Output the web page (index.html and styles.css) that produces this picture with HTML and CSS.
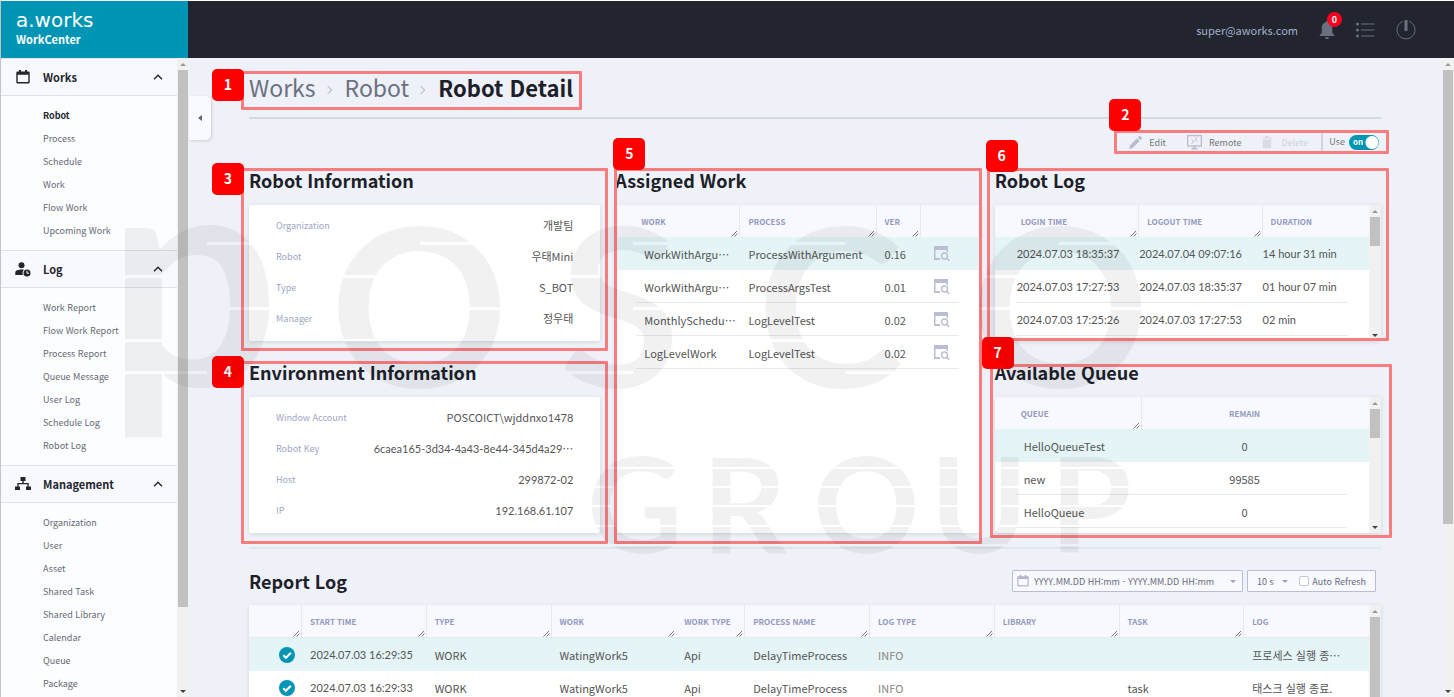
FILE: index.html
```html
<!DOCTYPE html>
<html lang="ko">
<head>
    <meta charset="UTF-8">
    <meta name="viewport" content="width=device-width, initial-scale=1.0">
    <title>a.works WorkCenter</title>
    <link rel="stylesheet" href="styles.css">
</head>
<body>
    <!-- shared icons -->
    <svg class="sprite" aria-hidden="true">
        <symbol id="i-cal" viewBox="0 0 14 14"><path fill="currentColor" fill-rule="evenodd" d="M3 0h2v1.500h4V0h2v1.500h1.500a1.200 1.200 0 0 1 1.200 1.200v9.600a1.200 1.200 0 0 1-1.200 1.200h-11a1.200 1.200 0 0 1-1.200-1.200V2.700a1.200 1.200 0 0 1 1.200-1.200H3zM1.700 4.700v7.400h10.600V4.700z"/></symbol>
        <symbol id="i-up" viewBox="0 0 10 6"><path d="M1 5.200 5 1.200 9 5.200" fill="none" stroke="currentColor" stroke-width="1.400"/></symbol>
        <symbol id="i-resize" viewBox="0 0 7 7"><path d="M.500 6.500 6 1M3.500 6.500 6.500 3.500" fill="none" stroke="#777" stroke-width="1"/></symbol>
        <symbol id="i-view" viewBox="0 0 16 16"><path fill="none" stroke="#b9bed3" stroke-width="1.500" d="M13.200 6V1.500M.750 1v12H6"/><path fill="#b9bed3" d="M0 0h14v4H0zM0 12.200h6V14H0z"/><circle cx="10.500" cy="10" r="3" fill="none" stroke="#b9bed3" stroke-width="1.400"/><path d="m12.700 12.200 2.600 2.600" stroke="#b9bed3" stroke-width="1.600"/></symbol>
        <symbol id="i-ok" viewBox="0 0 16 16"><circle cx="8" cy="8" r="8" fill="#0095b5"/><path d="m4.300 8.200 2.600 2.500 5-5" fill="none" stroke="#fff" stroke-width="2.200"/></symbol>
    </svg>

    <header class="topbar">
        <a class="brand" href="#"><span class="brand-name">a.works</span><span class="brand-sub">WorkCenter</span></a>
        <div class="user">
            <span class="email">super@aworks.com</span>
            <button class="icon-btn bell" aria-label="Notifications">
                <svg width="16" height="20" viewBox="0 0 16 20"><path fill="#6b7080" d="M8 1c1 0 1.500.700 1.500 1.600C12 3.400 13.300 5.500 13.300 8v5l2 2.200v.800H.700v-.800l2-2.200V8c0-2.500 1.300-4.600 3.800-5.400C6.500 1.700 7 1 8 1zM6 17.200h4c0 1.100-.900 1.800-2 1.800s-2-.700-2-1.800z"/></svg>
                <span class="count">0</span>
            </button>
            <button class="icon-btn" aria-label="List">
                <svg width="19" height="16" viewBox="0 0 19 16"><path stroke="#6b7080" stroke-width="1.200" d="M5 2h13.500M5 8h13.500M5 14h13.500"/><g fill="#6b7080"><circle cx="1.500" cy="2" r="1.500"/><circle cx="1.500" cy="8" r="1.500"/><circle cx="1.500" cy="14" r="1.500"/></g></svg>
            </button>
            <button class="icon-btn" aria-label="Logout">
                <svg width="20" height="20" viewBox="0 0 20 20"><path d="M7 1.400a9 9 0 1 0 6 0" fill="none" stroke="#6b7080" stroke-width="1"/><path d="M10 0v11" stroke="#6b7080" stroke-width="3"/></svg>
            </button>
        </div>
    </header>

    <div class="layout">
        <aside class="sidebar">
            <nav class="menu">
                <button class="menu-title">
                    <svg class="menu-icon" width="14" height="14"><use href="#i-cal"/></svg>Works<svg class="chev" width="10" height="6"><use href="#i-up"/></svg>
                </button>
                <ul>
                    <li><a class="active" href="#">Robot</a></li>
                    <li><a href="#">Process</a></li>
                    <li><a href="#">Schedule</a></li>
                    <li><a href="#">Work</a></li>
                    <li><a href="#">Flow Work</a></li>
                    <li><a href="#">Upcoming Work</a></li>
                </ul>
                <button class="menu-title">
                    <svg class="menu-icon" width="16" height="15" viewBox="0 0 16 15"><g fill="#22252e"><circle cx="6.500" cy="3.200" r="3"/><path d="M.300 13V10.500C.300 8.500 3.500 7.600 6.500 7.600c1 0 1.800.100 2.500.200a4.500 4.500 0 0 0-1 5.200z"/><circle cx="12" cy="11" r="3.500"/></g><path d="M12 8.800v2.400h2" fill="none" stroke="#fff" stroke-width="1"/></svg>Log<svg class="chev" width="10" height="6"><use href="#i-up"/></svg>
                </button>
                <ul>
                    <li><a href="#">Work Report</a></li>
                    <li><a href="#">Flow Work Report</a></li>
                    <li><a href="#">Process Report</a></li>
                    <li><a href="#">Queue Message</a></li>
                    <li><a href="#">User Log</a></li>
                    <li><a href="#">Schedule Log</a></li>
                    <li><a href="#">Robot Log</a></li>
                </ul>
                <button class="menu-title">
                    <svg class="menu-icon" width="16" height="14" viewBox="0 0 16 14"><path fill="#22252e" d="M5.500 0h5v4H8.700v2h5v3.500H16V13h-5V9.500h1.400V7.300H3.600v2.200H5V13H0V9.500h2.300V6h5V4H5.500z"/></svg>Management<svg class="chev" width="10" height="6"><use href="#i-up"/></svg>
                </button>
                <ul>
                    <li><a href="#">Organization</a></li>
                    <li><a href="#">User</a></li>
                    <li><a href="#">Asset</a></li>
                    <li><a href="#">Shared Task</a></li>
                    <li><a href="#">Shared Library</a></li>
                    <li><a href="#">Calendar</a></li>
                    <li><a href="#">Queue</a></li>
                    <li><a href="#">Package</a></li>
                </ul>
            </nav>
            <div class="scroll"><i class="arrow-up"></i><i class="thumb thumb-menu"></i><i class="arrow-down"></i></div>
            <button class="collapse" aria-label="Collapse menu"></button>
        </aside>

        <main class="content">
            <div class="page-head">
                <h1 class="crumbs">
                    <a href="#">Works</a><i></i><a href="#">Robot</a><i></i><strong>Robot Detail</strong>
                    <span class="mark mark-1"><b>1</b></span>
                </h1>
            </div>

            <div class="toolbar-row">
                <div class="toolbar">
                    <button class="tool tool-edit"><svg width="13" height="13" viewBox="0 0 13 13"><path fill="#b9bbcd" d="M0 13l1-3.500L8 2.300 10.700 5 3.500 12zM8.800 1.500 10 .300c.500-.400 1-.400 1.400 0l1.300 1.300c.400.400.400.900 0 1.400l-1.200 1.200z"/></svg>Edit</button>
                    <button class="tool tool-remote"><svg width="15" height="15" viewBox="0 0 15 15"><rect x=".600" y=".600" width="13.800" height="10.400" fill="none" stroke="#b9bbcd" stroke-width="1.300"/><path d="m4.500 4.500 2.500 2-2.500 2M10.500 2.500 8 4.500l2.500 2" fill="none" stroke="#b9bbcd"/><path fill="#b9bbcd" d="M6.500 11h2v2h2v1.600h-6V13h2z"/></svg>Remote</button>
                    <button class="tool tool-delete" disabled><svg width="10" height="12" viewBox="0 0 10 12"><path fill="#d9dbe5" d="M0 1.200h2.800L3.500 0h3l.700 1.200H10v1.300H0zM.800 3.500h8.400V12H.800z"/></svg>Delete</button>
                    <label class="use">Use<span class="switch"><input type="checkbox" checked><span>on</span></span></label>
                    <span class="mark mark-2"><b>2</b></span>
                </div>
            </div>

            <div class="panels">
                <div class="stack">
                    <section class="panel">
                        <h2>Robot Information</h2>
                        <dl class="card info">
                            <div><dt>Organization</dt><dd>개발팀</dd></div>
                            <div><dt>Robot</dt><dd>우태Mini</dd></div>
                            <div><dt>Type</dt><dd>S_BOT</dd></div>
                            <div><dt>Manager</dt><dd>정우태</dd></div>
                        </dl>
                        <span class="mark mark-3"><b>3</b></span>
                    </section>
                    <section class="panel">
                        <h2>Environment Information</h2>
                        <dl class="card info">
                            <div><dt>Window Account</dt><dd>POSCOICT\wjddnxo<span class="num">1478</span></dd></div>
                            <div><dt>Robot Key</dt><dd><span class="num">6caea165-3d34-4a43-8e44-345d4a29</span>…</dd></div>
                            <div><dt>Host</dt><dd class="num">299872-02</dd></div>
                            <div><dt>IP</dt><dd class="num">192.168.61.107</dd></div>
                        </dl>
                        <span class="mark mark-4"><b>4</b></span>
                    </section>
                </div>

                <section class="panel">
                    <h2>Assigned Work</h2>
                    <div class="card grid-box tall">
                        <table class="works">
                            <thead>
                                <tr><th>WORK<svg class="rs"><use href="#i-resize"/></svg></th><th>PROCESS<svg class="rs"><use href="#i-resize"/></svg></th><th>VER<svg class="rs"><use href="#i-resize"/></svg></th><th></th></tr>
                            </thead>
                            <tbody>
                                <tr class="on"><td>WorkWithArgu…</td><td>ProcessWithArgument</td><td>0.16</td><td><svg width="16" height="16"><use href="#i-view"/></svg></td></tr>
                                <tr><td>WorkWithArgu…</td><td>ProcessArgsTest</td><td>0.01</td><td><svg width="16" height="16"><use href="#i-view"/></svg></td></tr>
                                <tr><td>MonthlySchedu…</td><td>LogLevelTest</td><td>0.02</td><td><svg width="16" height="16"><use href="#i-view"/></svg></td></tr>
                                <tr><td>LogLevelWork</td><td>LogLevelTest</td><td>0.02</td><td><svg width="16" height="16"><use href="#i-view"/></svg></td></tr>
                            </tbody>
                        </table>
                    </div>
                    <span class="mark mark-5"><b>5</b></span>
                </section>

                <div class="stack">
                    <section class="panel">
                        <h2>Robot Log</h2>
                        <div class="card grid-box">
                            <table class="logs">
                                <thead>
                                    <tr><th>LOGIN TIME<svg class="rs"><use href="#i-resize"/></svg></th><th>LOGOUT TIME<svg class="rs"><use href="#i-resize"/></svg></th><th>DURATION</th></tr>
                                </thead>
                                <tbody class="num">
                                    <tr class="on"><td>2024.07.03 18:35:37</td><td>2024.07.04 09:07:16</td><td>14 hour 31 min</td></tr>
                                    <tr><td>2024.07.03 17:27:53</td><td>2024.07.03 18:35:37</td><td>01 hour 07 min</td></tr>
                                    <tr><td>2024.07.03 17:25:26</td><td>2024.07.03 17:27:53</td><td>02 min</td></tr>
                                </tbody>
                            </table>
                            <div class="scroll"><i class="arrow-up"></i><i class="thumb"></i><i class="arrow-down"></i></div>
                        </div>
                        <span class="mark mark-6"><b>6</b></span>
                    </section>
                    <section class="panel">
                        <h2>Available Queue</h2>
                        <div class="card grid-box">
                            <table class="queues">
                                <thead>
                                    <tr><th>QUEUE<svg class="rs"><use href="#i-resize"/></svg></th><th>REMAIN</th></tr>
                                </thead>
                                <tbody>
                                    <tr class="on"><td>HelloQueueTest</td><td>0</td></tr>
                                    <tr><td>new</td><td>99585</td></tr>
                                    <tr><td>HelloQueue</td><td>0</td></tr>
                                </tbody>
                            </table>
                            <div class="scroll"><i class="arrow-up"></i><i class="thumb"></i><i class="arrow-down"></i></div>
                        </div>
                        <span class="mark mark-7"><b>7</b></span>
                    </section>
                </div>
            </div>

            <section class="report">
                <div class="report-head">
                    <h2>Report Log</h2>
                    <div class="filters">
                        <label class="field date">
                            <svg width="12" height="12"><use href="#i-cal"/></svg>
                            <input type="text" aria-label="Period" placeholder="YYYY.MM.DD HH:mm - YYYY.MM.DD HH:mm">
                            <i class="caret"></i>
                        </label>
                        <div class="field refresh">
                            <select aria-label="Interval"><option>10 s</option><option>30 s</option></select><i class="caret"></i>
                            <label class="auto"><input type="checkbox">Auto Refresh</label>
                        </div>
                    </div>
                </div>
                <div class="card grid-box report-box">
                    <table class="reports">
                        <thead>
                            <tr>
                                <th><svg class="rs"><use href="#i-resize"/></svg></th>
                                <th>START TIME<svg class="rs"><use href="#i-resize"/></svg></th>
                                <th>TYPE<svg class="rs"><use href="#i-resize"/></svg></th>
                                <th>WORK<svg class="rs"><use href="#i-resize"/></svg></th>
                                <th>WORK TYPE<svg class="rs"><use href="#i-resize"/></svg></th>
                                <th>PROCESS NAME<svg class="rs"><use href="#i-resize"/></svg></th>
                                <th>LOG TYPE<svg class="rs"><use href="#i-resize"/></svg></th>
                                <th>LIBRARY<svg class="rs"><use href="#i-resize"/></svg></th>
                                <th>TASK<svg class="rs"><use href="#i-resize"/></svg></th>
                                <th>LOG</th>
                            </tr>
                        </thead>
                        <tbody>
                            <tr class="on"><td><svg width="16" height="16"><use href="#i-ok"/></svg></td><td class="num">2024.07.03 16:29:35</td><td>WORK</td><td>WatingWork5</td><td>Api</td><td>DelayTimeProcess</td><td class="level">INFO</td><td></td><td></td><td>프로세스 실행 종…</td></tr>
                            <tr><td><svg width="16" height="16"><use href="#i-ok"/></svg></td><td class="num">2024.07.03 16:29:33</td><td>WORK</td><td>WatingWork5</td><td>Api</td><td>DelayTimeProcess</td><td class="level">INFO</td><td></td><td>task</td><td>태스크 실행 종료.</td></tr>
                        </tbody>
                    </table>
                    <div class="scroll"><i class="arrow-up"></i><i class="thumb thumb-fill"></i></div>
                </div>
            </section>
        </main>
        <div class="scroll page-scroll"><i class="arrow-up"></i><i class="thumb thumb-page"></i><i class="arrow-down"></i></div>
    </div>

    <!-- watermark -->
    <svg class="watermark" viewBox="0 0 1060 350" width="1060" height="350" aria-hidden="true">
        <mask id="cuts">
            <rect width="1060" height="350" fill="#fff"/>
            <g fill="#000">
                <path d="M82 20h90v3H82zM295 20h90v3h-90zM508 20h213v3H508zM934 20h90v3h-90zM0 53h82v3H0zM210 53h85v3h-85zM420 53h88v3h-88zM722 53h220v3H722zM82 85h90v3H82zM295 85h90v3h-90zM508 85h90v3h-90zM850 85h190v3H850zM0 117h82v3H0zM210 117h85v3h-85zM420 117h88v3h-88zM640 117h81v3h-81zM0 149h82v3H0zM420 149h88v3h-88zM721 149h90v3h-90z"/>
                <path d="M460 245h560v2H460zM460 264h560v2H460zM460 283h560v2H460zM460 303h560v2H460zM460 322h560v2H460z"/>
            </g>
        </mask>
        <g mask="url(#cuts)" fill="#000">
            <text class="wm-p" x="-20" y="164">p</text>
            <text class="wm-big" x="205 434 632 846" y="165">OSCO</text>
            <text class="wm-small" x="462 577 688 805 925" y="331">GROUP</text>
        </g>
    </svg>
</body>
</html>
```

FILE: styles.css
```css
* {
    box-sizing: border-box;
}
body {
    margin: 0;
    height: 100vh;
    overflow: hidden;
    display: flex;
    flex-direction: column;
    position: relative;
    border-top: 1px solid #fff;
    border-left: 1px solid #c4c4c4;
    background: #eef1f7;
    color: #555;
    font-family: "Noto Sans CJK KR", sans-serif;
    font-size: 11px;
}
h1, h2, ul, dl, dd {
    margin: 0;
    padding: 0;
}
a {
    color: inherit;
    text-decoration: none;
}
button, input, select {
    font: inherit;
    color: inherit;
    border: none;
    background: none;
    padding: 0;
    margin: 0;
}
svg {
    flex: none;
}
.sprite {
    position: absolute;
    width: 0;
    height: 0;
}
.num {
    font-family: Lato, "Noto Sans CJK KR", sans-serif;
}

/* top bar */
.topbar {
    display: flex;
    justify-content: space-between;
    flex: none;
    height: 57px;
    background: #22252e;
}
.brand {
    width: 187px;
    padding: 9px 15px;
    display: flex;
    flex-direction: column;
    background: #0095b5;
    color: #fff;
}
.brand-name {
    font: 20px/20px "DejaVu Sans", sans-serif;
}
.brand-sub {
    font-weight: bold;
    line-height: 18px;
}
.user {
    display: flex;
    align-items: center;
    gap: 21px;
    padding-right: 38px;
}
.email {
    color: #a3b0cf;
}
.icon-btn {
    position: relative;
    display: flex;
}
.count {
    position: absolute;
    left: 8px;
    top: -8px;
    width: 15px;
    height: 15px;
    border-radius: 50%;
    background: #f9001e;
    color: #fff;
    font-size: 9px;
    font-weight: bold;
    line-height: 15px;
}

/* sidebar */
.layout {
    flex: 1;
    display: flex;
    min-height: 0;
}
.sidebar {
    position: relative;
    display: flex;
    flex: none;
    width: 188px;
    background: #fcfdff;
}
.menu {
    flex: 1;
    overflow: hidden;
}
.menu-title {
    display: flex;
    align-items: center;
    width: 100%;
    height: 38px;
    padding: 0 14px;
    border-top: 1px solid #e1e3ec;
    border-bottom: 1px solid #e1e3ec;
    background: #f8f9fe;
    color: #22252e;
    font-weight: bold;
    text-align: left;
}
.menu-icon {
    width: 16px;
    margin-right: 12px;
}
.chev {
    margin-left: auto;
}
.menu ul {
    list-style: none;
    padding: 8px 0 8px 42px;
}
.menu li {
    font-size: 9px;
    line-height: 23px;
    color: #666973;
}
.menu .active {
    color: #22252e;
    font-weight: bold;
}
.collapse {
    position: absolute;
    left: 188px;
    top: 38px;
    width: 22px;
    height: 44px;
    border-radius: 0 5px 5px 0;
    background: #f9faff;
    box-shadow: 1px 1px 3px rgba(0, 0, 0, 0.15);
}
.collapse::before {
    content: "";
    display: block;
    margin-left: 9px;
    width: 0;
    border: 3px solid transparent;
    border-left: none;
    border-right: 4px solid #5c6180;
}

/* scrollbars */
.scroll {
    display: flex;
    flex-direction: column;
    flex: none;
    width: 12px;
    background: #f1f1f1;
}
.arrow-up, .arrow-down {
    flex: none;
    height: 12px;
    position: relative;
}
.arrow-up::before, .arrow-down::before {
    content: "";
    position: absolute;
    left: 3px;
    top: 5px;
    border: 3px solid transparent;
}
.arrow-up::before {
    border-top: none;
    border-bottom-color: #999;
}
.arrow-down {
    margin-top: auto;
}
.arrow-down::before {
    border-bottom: none;
    border-top-color: #444;
}
.thumb {
    height: 29px;
    margin: 0 1px;
    background: #c1c1c1;
}
.thumb-menu {
    height: 84%;
}
.thumb-page {
    height: 71%;
}
.thumb-fill {
    flex: 1;
}

/* content */
.content {
    flex: 1;
    min-width: 0;
    padding: 0 61px 0 60px;
    overflow: hidden;
}
.page-head {
    padding: 13px 0 12px;
    border-bottom: 2px solid #d3d9e5;
}
.crumbs {
    position: relative;
    display: inline-flex;
    align-items: center;
    height: 34px;
    vertical-align: top;
    color: #6b7082;
    font-size: 23px;
    font-weight: normal;
    line-height: 32px;
}
.crumbs a, .crumbs strong {
    padding-bottom: 2px;
}
.crumbs strong {
    color: #1c2029;
    font-size: 22px;
}
.crumbs i {
    width: 6px;
    height: 6px;
    margin: 4px 14px 0 9px;
    border: solid #b8bdcb;
    border-width: 1px 1px 0 0;
    transform: rotate(45deg);
}
.toolbar-row {
    display: flex;
    justify-content: flex-end;
    margin: 11px 0 14px;
}
.toolbar {
    position: relative;
    display: flex;
    align-items: center;
    height: 24px;
    padding-right: 2px;
    font-size: 9px;
    color: #777;
}
.tool {
    display: flex;
    align-items: center;
    gap: 7px;
    margin-right: 21px;
}
.tool-delete {
    gap: 9px;
    margin-right: 13px;
    color: #d0d3dc;
}
.use {
    display: flex;
    align-items: center;
    gap: 4px;
    padding-left: 6px;
    border-left: 2px solid #d3d5de;
    line-height: 18px;
}
.switch {
    position: relative;
    display: flex;
    color: #fff;
    font-size: 8px;
    font-weight: bold;
    line-height: 14px;
}
.switch input {
    appearance: none;
    width: 30px;
    height: 15px;
    border-radius: 8px;
    background: radial-gradient(circle at 23px 50%, #fff 6px, #0095b5 7px);
}
.switch span {
    position: absolute;
    left: 4px;
}
.panels {
    display: grid;
    grid-template-columns: 351fr 364fr 386fr;
    gap: 15px;
    padding-bottom: 14px;
    border-bottom: 2px solid #e1e5ec;
}
.stack {
    display: flex;
    flex-direction: column;
    gap: 19px;
    min-width: 0;
}
.panel {
    position: relative;
    display: flex;
    flex-direction: column;
    min-width: 0;
}
h2 {
    color: #1c2029;
    font-size: 18px;
    font-weight: bold;
    line-height: 24px;
}
.panel h2 {
    margin-bottom: 13px;
}
.card {
    background: #fff;
    border-radius: 2px;
    box-shadow: 0 1px 4px rgba(0, 0, 0, 0.12);
}
.info {
    padding: 5px 27px 7px;
}
.info div {
    display: flex;
    justify-content: space-between;
    height: 31px;
    line-height: 31px;
}
.info dt {
    color: #a0a5c5;
    font-size: 9px;
}

/* tables */
.grid-box {
    display: flex;
    align-items: stretch;
    height: 136px;
    overflow: hidden;
}
.tall {
    flex: 1;
    align-items: flex-start;
}
table {
    flex: 1;
    align-self: flex-start;
    width: 100%;
    table-layout: fixed;
    border-collapse: separate;
    border-spacing: 0;
}
th {
    position: relative;
    height: 32px;
    padding: 0 0 0 8px;
    border-right: 1px solid #e6e8ef;
    background: #f8f9fe;
    color: #9299c0;
    font-size: 8px;
    text-align: left;
    white-space: nowrap;
}
th:last-child {
    border-right: none;
}
.rs {
    position: absolute;
    right: 1px;
    bottom: 0;
    width: 7px;
    height: 7px;
}
td {
    height: 33px;
    padding: 0 0 0 8px;
    white-space: nowrap;
}
td svg {
    display: block;
}
tbody tr {
    background: linear-gradient(#e9eaee, #e9eaee) no-repeat center bottom / calc(100% - 42px) 1px;
}
tbody .on {
    background: #e4f4f7;
}
.works th:nth-child(1) { width: 125px; }
.works th:nth-child(2) { width: 136px; }
.works th:nth-child(3) { width: 44px; }
.works th:nth-child(4) { width: 59px; }
.works th:first-child, .logs th:first-child, .queues th:first-child {
    padding-left: 26px;
}
.works td:first-child, .queues td:first-child {
    padding-left: 29px;
}
.works td:last-child {
    padding-left: 13px;
}
.logs th:nth-child(1) { width: 144px; }
.logs th:nth-child(2) { width: 123px; }
.logs th:nth-child(3) { width: 106px; }
.logs td {
    padding-left: 0;
}
.logs td:first-child {
    padding-left: 22px;
}
.queues th:nth-child(1) { width: 147px; }
.queues th:nth-child(2) { width: 226px; }
.queues th:last-child, .queues td:last-child {
    padding: 0 22px 0 0;
    text-align: center;
}

/* report log */
.report-head {
    display: flex;
    justify-content: space-between;
    padding: 20px 5px 12px 0;
}
.filters {
    display: flex;
    align-items: center;
    gap: 4px;
}
.field {
    display: flex;
    align-items: center;
    height: 22px;
    border: 1px solid #b9bfd2;
    border-radius: 1px;
    background: #f8f9fe;
    color: #686c79;
    font-size: 9px;
}
.date {
    width: 231px;
    padding: 0 6px 0 4px;
    gap: 5px;
}
.date svg {
    color: #b2b7ce;
}
.date input {
    flex: 1;
    min-width: 0;
}
.date input::placeholder {
    color: #686c79;
}
.caret {
    border: 3px solid transparent;
    border-top-color: #9aa3c4;
    border-bottom: none;
}
.refresh {
    width: 129px;
    padding: 0 9px;
}
.refresh select {
    appearance: none;
    width: 25px;
}
.auto {
    display: flex;
    align-items: center;
    gap: 3px;
    margin-left: auto;
    white-space: nowrap;
}
.auto input {
    appearance: none;
    width: 10px;
    height: 10px;
    border: 1px solid #c4c8d6;
    border-radius: 2px;
    background: #fff;
}
.report-box {
    height: 260px;
}
.reports th {
    height: 33px;
    border-bottom: 1px solid #e6e8ef;
}
.reports th:nth-child(1) { width: 53px; }
.reports th:nth-child(5) { width: 69px; }
.reports th:nth-child(4) { border-right: none; }
.reports td:first-child {
    padding-left: 30px;
}
.level {
    color: #8a8480;
}

/* numbered frames */
.mark {
    position: absolute;
    border: 3px solid #f97c7f;
    border-radius: 1px;
    pointer-events: none;
    z-index: 2;
}
.mark b {
    position: absolute;
    width: 32px;
    height: 32px;
    border-radius: 5px;
    background: #f00;
    color: #fff;
    font-size: 14px;
    font-weight: bold;
    line-height: 31px;
    text-align: center;
}
.mark-1 { inset: 0 -9px -5px -8px; }
.mark-1 b { left: -32px; top: -5px; }
.mark-2 { inset: 0 -8px 0 -15px; }
.mark-2 b { left: -8px; top: -34px; }
.mark-3 { inset: 0 -8px -10px; }
.mark-3 b, .mark-4 b { left: -32px; top: -8px; }
.mark-4 { inset: 1px -8px -11px; }
.mark-5 { inset: 0 -2px -11px -1px; }
.mark-5 b { left: -4px; top: -33px; }
.mark-6 { inset: 0 -8px 0 -8px; }
.mark-6 b { left: -4px; top: -31px; }
.mark-7 { inset: 4px -11px -5px -5px; }
.mark-7 b { left: -11px; top: -30px; }

.watermark {
    position: absolute;
    left: 124px;
    top: 221px;
    overflow: visible;
    opacity: 0.05;
    pointer-events: none;
    z-index: 3;
}
.watermark text {
    font-family: Lato, sans-serif;
    font-weight: bold;
}
.wm-p {
    font-size: 308px;
}
.wm-big {
    font-size: 221px;
}
.wm-small {
    font-size: 132px;
}
```
